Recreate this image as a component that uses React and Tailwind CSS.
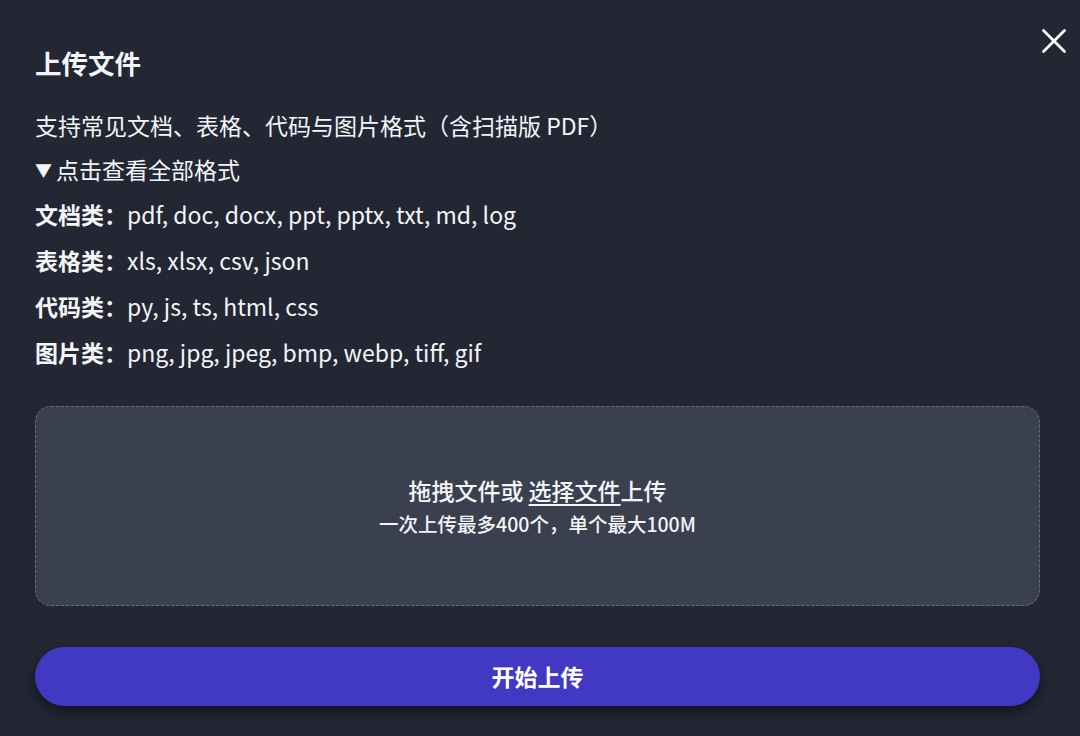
import React from 'react';

const groups = [
    { label: '文档类：', exts: 'pdf, doc, docx, ppt, pptx, txt, md, log' },
    { label: '表格类：', exts: 'xls, xlsx, csv, json' },
    { label: '代码类：', exts: 'py, js, ts, html, css' },
    { label: '图片类：', exts: 'png, jpg, jpeg, bmp, webp, tiff, gif' },
];

const App = () => {
    return (
        <div
            className="relative w-full h-[736px] bg-[#222733] text-[#f4f5f7] overflow-hidden"
            style={{ fontFamily: '"Noto Sans CJK SC", "Noto Sans", sans-serif' }}
        >
            <button className="absolute top-[28px] right-[13px] w-[26px] h-[26px] flex items-center justify-center text-white">
                <svg width="26" height="26" viewBox="0 0 26 26" fill="none" stroke="currentColor" strokeWidth="2.8" strokeLinecap="round">
                    <path d="M2.5 2.5l21 21M23.5 2.5l-21 21" />
                </svg>
            </button>

            <div className="pl-[35px] pr-[40px] pt-[45px] flex flex-col">
                <h2 className="text-[26.5px] leading-[36px] font-bold">上传文件</h2>

                <p className="mt-[21px] text-[23px] leading-[46px]">支持常见文档、表格、代码与图片格式（含扫描版 PDF）</p>

                <div className="h-[43px] flex items-center text-[23px]">
                    <span className="text-[17px] mr-[4px] leading-none">▼</span>
                    <span>点击查看全部格式</span>
                </div>

                <div className="flex flex-col">
                    {groups.map(g => (
                        <div key={g.label} className="text-[23px] leading-[46px] flex">
                            <span className="font-bold">{g.label}</span>
                            <span>{g.exts}</span>
                        </div>
                    ))}
                </div>

                <div className="mt-[31px] h-[200px] rounded-[16px] bg-[#3b404f] border border-dashed border-[#676c7b] flex flex-col items-center justify-center">
                    <p className="text-[23px] leading-[32px] font-medium">
                        拖拽文件或 <span className="underline underline-offset-[4px] decoration-[1.5px]">选择文件</span>上传
                    </p>
                    <p className="text-[19.5px] leading-[28px] mt-[4px] font-medium">一次上传最多400个，单个最大100M</p>
                </div>

                <button className="mt-[41px] h-[59px] rounded-full bg-[#4139c3] shadow-[0_6px_14px_rgba(0,0,0,0.45)] text-[23px] font-bold text-white flex items-center justify-center">
                    开始上传
                </button>
            </div>
        </div>
    );
};

export default App;
